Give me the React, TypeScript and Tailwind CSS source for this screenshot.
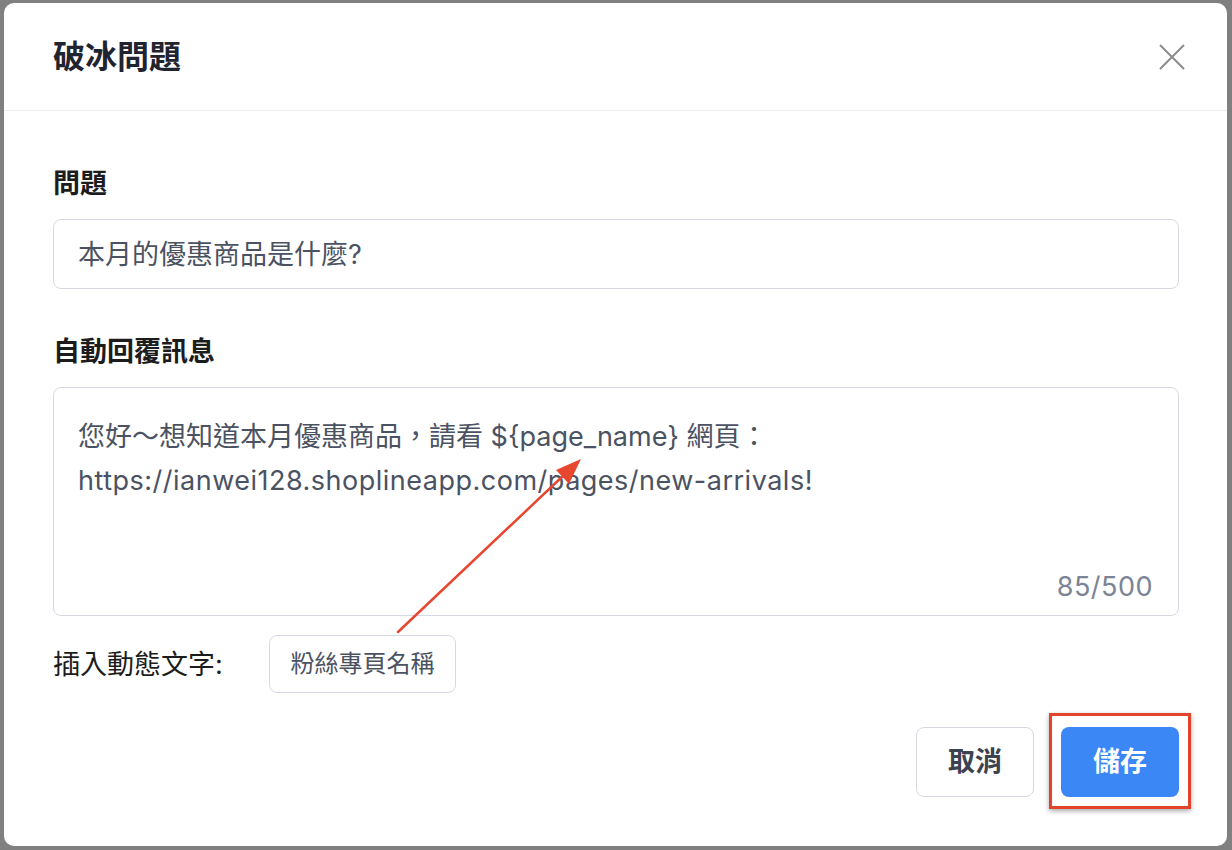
import React from 'react';

const font = { fontFamily: 'Inter, "Noto Sans CJK TC", "Noto Sans", sans-serif' };

function CloseIcon() {
  return (
    <svg width="26" height="26" viewBox="0 0 26 26" fill="none">
      <path d="M1 1 L25 25 M25 1 L1 25" stroke="#8c8c8c" strokeWidth="2" />
    </svg>
  );
}

function Arrow() {
  // red annotation arrow drawn over the dialog
  return (
    <svg className="absolute inset-0 pointer-events-none" width="1232" height="850" viewBox="0 0 1232 850">
      <line x1="398" y1="632" x2="564" y2="475" stroke="#e8472f" strokeWidth="2.5" strokeLinecap="round" />
      <polygon points="581,459 569,484 556,470" fill="#e8472f" />
    </svg>
  );
}

export default function App() {
  return (
    <div
      className="relative w-[1232px] h-[850px] bg-[#808080] pt-[3px] pl-[4px] pr-[5px] pb-[4px]"
      style={font}
    >
      <div className="w-full h-full bg-white rounded-[10px] flex flex-col">
        {/* Header */}
        <div className="h-[108px] flex items-center justify-between pl-[49px] pr-[42px] border-b border-[#ececec]">
          <h2 className="text-[32px] font-bold text-[#1f2430] leading-none">破冰問題</h2>
          <button className="w-[26px] h-[26px] flex items-center justify-center">
            <CloseIcon />
          </button>
        </div>

        {/* Body */}
        <div className="flex-1 flex flex-col pl-[49px] pr-[48px] pt-[53px] pb-[49px]">
          <div className="h-[36px] leading-[40px] text-[27px] font-semibold text-[#1c1c1c] mb-[19px]">問題</div>
          <div className="h-[70px] border border-[#d6d9e2] rounded-[8px] flex items-center px-6 pt-[2px] text-[27px] text-[#4b5262]">
            本月的優惠商品是什麼?
          </div>

          <div className="mt-[43px] h-[36px] leading-[40px] text-[27px] font-semibold text-[#1c1c1c] mb-[19px]">
            自動回覆訊息
          </div>
          <div className="relative h-[229px] border border-[#d6d9e2] rounded-[8px] px-6 pt-[27px] text-[27px] leading-[44px] text-[#4b5262]">
            <div>您好～想知道本月優惠商品，請看 ${'{'}page_name{'}'} 網頁：</div>
            <div className="tracking-[0.5px]">https://ianwei128.shoplineapp.com/pages/new-arrivals!</div>
            <div className="absolute right-[25px] bottom-[12px] leading-[32px] tracking-[0.5px] text-[#7b8395]">85/500</div>
          </div>

          <div className="mt-[19px] flex items-center">
            <span className="w-[216px] pt-[2px] text-[27px] text-[#1c1c1c]">插入動態文字:</span>
            <button className="w-[187px] h-[58px] border border-[#d6d9e2] rounded-[8px] text-[24px] text-[#4b5262]">
              粉絲專頁名稱
            </button>
          </div>

          <div className="mt-[34px] flex justify-end gap-[27px]">
            <button className="w-[118px] h-[70px] border border-[#d6d9e2] rounded-[8px] text-[27px] font-bold text-[#3c4250]">
              取消
            </button>
            <div className="relative">
              <button className="w-[118px] h-[70px] rounded-[8px] bg-[#3b87f5] text-[27px] font-bold text-white">
                儲存
              </button>
              <div className="absolute -left-[12px] -right-[12px] -top-[14px] -bottom-[12px] border-[3px] border-[#e4432b] shadow-[0_2px_5px_rgba(0,0,0,0.35)] pointer-events-none" />
            </div>
          </div>
        </div>
      </div>
      <Arrow />
    </div>
  );
}
